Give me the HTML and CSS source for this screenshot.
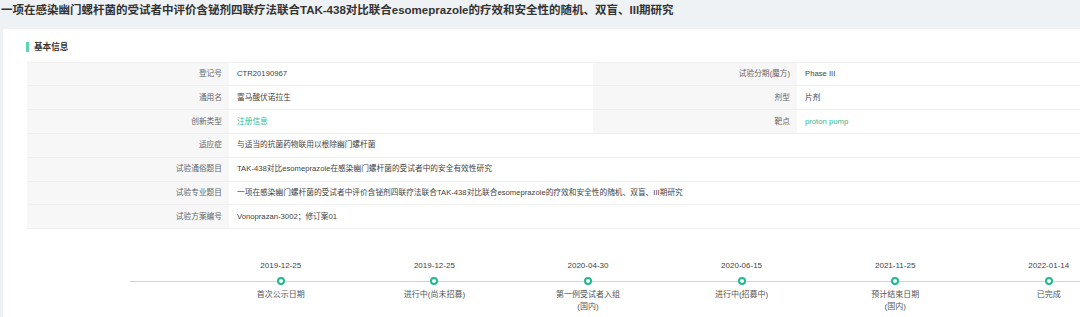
FILE: index.html
```html
<!DOCTYPE html>
<html lang="zh-CN">
<head>
<meta charset="utf-8">
<title>试验详情</title>
<link rel="stylesheet" href="styles.css">
</head>
<body>
<header class="title-bar">
  <h1 class="title">一项在感染幽门螺杆菌的受试者中评价含铋剂四联疗法联合TAK-438对比联合esomeprazole的疗效和安全性的随机、双盲、III期研究</h1>
</header>
<section class="card">
  <div class="section-head"><span class="section-bar"></span><span class="section-name">基本信息</span></div>
  <div class="info-grid">
    <div class="cell label">登记号</div>
    <div class="cell value">CTR20190967</div>
    <div class="cell label">试验分期(魔方)</div>
    <div class="cell value">Phase III</div>

    <div class="cell label">通用名</div>
    <div class="cell value">富马酸伏诺拉生</div>
    <div class="cell label">剂型</div>
    <div class="cell value">片剂</div>

    <div class="cell label">创新类型</div>
    <div class="cell value link">注册信息</div>
    <div class="cell label">靶点</div>
    <div class="cell value link">proton pump</div>

    <div class="cell label">适应症</div>
    <div class="cell value wide">与适当的抗菌药物联用以根除幽门螺杆菌</div>

    <div class="cell label">试验通俗题目</div>
    <div class="cell value wide">TAK-438对比esomeprazole在感染幽门螺杆菌的受试者中的安全有效性研究</div>

    <div class="cell label">试验专业题目</div>
    <div class="cell value wide">一项在感染幽门螺杆菌的受试者中评价含铋剂四联疗法联合TAK-438对比联合esomeprazole的疗效和安全性的随机、双盲、III期研究</div>

    <div class="cell label">试验方案编号</div>
    <div class="cell value wide">Vonoprazan-3002；修订案01</div>
  </div>

  <div class="timeline">
    <div class="tl-item">
      <div class="tl-date">2019-12-25</div>
      <div class="tl-dot"></div>
      <div class="tl-label">首次公示日期</div>
    </div>
    <div class="tl-item">
      <div class="tl-date">2019-12-25</div>
      <div class="tl-dot"></div>
      <div class="tl-label">进行中(尚未招募)</div>
    </div>
    <div class="tl-item">
      <div class="tl-date">2020-04-30</div>
      <div class="tl-dot"></div>
      <div class="tl-label">第一例受试者入组<br>(国内)</div>
    </div>
    <div class="tl-item">
      <div class="tl-date">2020-06-15</div>
      <div class="tl-dot"></div>
      <div class="tl-label">进行中(招募中)</div>
    </div>
    <div class="tl-item">
      <div class="tl-date">2021-11-25</div>
      <div class="tl-dot"></div>
      <div class="tl-label">预计结束日期<br>(国内)</div>
    </div>
    <div class="tl-item">
      <div class="tl-date">2022-01-14</div>
      <div class="tl-dot"></div>
      <div class="tl-label">已完成</div>
    </div>
  </div>
</section>
</body>
</html>
```

FILE: styles.css
```css
html, body {
  margin: 0;
  padding: 0;
  width: 1080px;
  height: 317px;
  overflow: hidden;
}

body {
  background: #eef2f5;
  font-family: "Liberation Sans", "Noto Sans CJK SC", sans-serif;
  color: #444;
}

.title-bar {
  height: 29px;
  display: flex;
  align-items: flex-start;
  overflow: hidden;
}

.title {
  margin: 0;
  padding: 4px 0 0 1px;
  font-size: 11.5px;
  line-height: 13px;
  font-weight: bold;
  color: #333;
  white-space: nowrap;
}

.card {
  margin-left: 3px;
  background: #fff;
  height: 288px;
  padding-left: 24px;
  box-sizing: border-box;
  overflow: hidden;
}

.section-head {
  display: flex;
  align-items: center;
  gap: 5px;
  padding-top: 12.7px;
  height: 10.6px;
  margin-left: -1px;
}

.section-bar {
  display: block;
  width: 3px;
  height: 10.6px;
  background: #5ed4b8;
}

.section-name {
  font-size: 8.6px;
  line-height: 10px;
  font-weight: bold;
  color: #333;
}

.info-grid {
  margin-top: 9.4px;
  display: grid;
  grid-template-columns: 202px 364px 204px 1fr;
  grid-auto-rows: 23.8px;
  border-top: 1px solid #efefef;
}

.cell {
  display: flex;
  align-items: center;
  font-size: 7.7px;
  line-height: 10px;
  border-bottom: 1px solid #efefef;
  box-sizing: border-box;
  white-space: nowrap;
}

.label {
  background: #f7f7f7;
  justify-content: flex-end;
  padding-right: 7px;
  color: #666;
}

.value {
  padding-left: 8px;
  color: #444;
}

.value.wide {
  grid-column: 2 / -1;
}

.value.link {
  color: #3bb893;
}

.timeline {
  position: relative;
  display: flex;
  padding-left: 177px;
  margin-top: 31px;
  overflow: hidden;
}

.timeline::before {
  content: "";
  position: absolute;
  left: 103px;
  right: 0;
  top: 20.5px;
  height: 1px;
  background: #b3e5d6;
}

.tl-item {
  position: relative;
  flex: 0 0 153.6px;
  display: flex;
  flex-direction: column;
  align-items: center;
  font-size: 8px;
}

.tl-date {
  line-height: 11px;
  height: 11px;
  color: #444;
  white-space: nowrap;
}

.tl-dot {
  margin-top: 6px;
  width: 8px;
  height: 8px;
  box-sizing: border-box;
  border: 2px solid #1eb892;
  border-radius: 50%;
  background: #fff;
  position: relative;
  z-index: 1;
}

.tl-label {
  margin-top: 4px;
  line-height: 12px;
  text-align: center;
  color: #555;
  white-space: nowrap;
}
```
